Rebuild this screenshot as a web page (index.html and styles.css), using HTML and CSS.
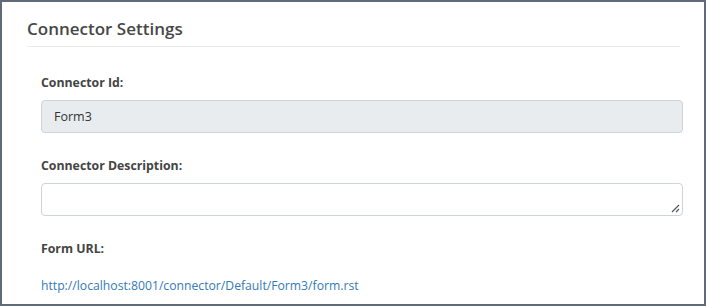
FILE: index.html
```html
<!DOCTYPE html>
<html>
<head>
<meta charset="utf-8">
<link rel="stylesheet" href="styles.css">
</head>
<body>
<div class="frame">
  <div class="panel">
    <h2 class="title">Connector Settings</h2>
    <div class="fields">
      <div class="field">
        <label class="label">Connector Id:</label>
        <div class="input readonly">Form3</div>
      </div>
      <div class="field">
        <label class="label">Connector Description:</label>
        <div class="input textarea">
          <svg class="grip" width="9" height="9" viewBox="0 0 9 9"><path d="M8 1 L1 8 M8 5 L5 8" stroke="#555" stroke-width="1.2" fill="none"/></svg>
        </div>
      </div>
      <div class="field">
        <label class="label">Form URL:</label>
        <a class="link" href="#">http://localhost:8001/connector/Default/Form3/form.rst</a>
      </div>
    </div>
  </div>
</div>
</body>
</html>
```
FILE: styles.css
```css
* { box-sizing: border-box; }
html, body { margin: 0; padding: 0; }
body {
  font-family: "Open Sans", "Noto Sans", sans-serif;
  color: #333;
  background: #fff;
}
.frame {
  width: 706px;
  height: 306px;
  border: 2px solid #5f6b78;
  overflow: hidden;
}
.panel {
  padding: 12px 24px 0 25px;
}
.title {
  margin: 0;
  font-size: 17px;
  font-weight: 600;
  color: #474747;
  line-height: 30px;
  padding-bottom: 2px;
  border-bottom: 1px solid #eaeaea;
}
.fields {
  padding: 29px 0 0 14px;
  margin-right: -3px;
  display: flex;
  flex-direction: column;
  gap: 26px;
}
.field {
  display: flex;
  flex-direction: column;
  gap: 10px;
}
.label {
  font-size: 12.3px;
  font-weight: 700;
  color: #444;
  line-height: 14px;
}
.input {
  height: 33px;
  border: 1px solid #ced4da;
  border-radius: 4px;
  font-size: 12.5px;
  color: #333;
  padding: 0 12px;
  display: flex;
  align-items: center;
  position: relative;
  background: #fff;
}
.readonly { background: #e9ecef; }
.grip { position: absolute; right: 2px; bottom: 2px; }
.link {
  margin-top: 12px;
  font-size: 12.2px;
  color: #337ab7;
  text-decoration: none;
  line-height: 16px;
}
```
